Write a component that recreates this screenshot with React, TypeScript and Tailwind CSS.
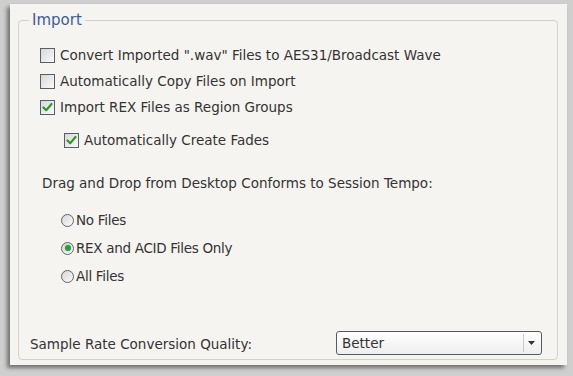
import React from 'react';

type CheckProps = { label: string; checked?: boolean; indent?: boolean };

const Checkbox: React.FC<CheckProps> = ({ label, checked, indent }) => (
  <div className={`h-[26px] flex items-center gap-[5px] ${indent ? 'pl-[45px]' : 'pl-[21px]'}`}>
    <span className="w-[15px] h-[15px] border border-[#55606c] bg-gradient-to-br from-[#d8d8d8] to-[#fafafa] flex items-center justify-center shrink-0">
      {checked && (
        <svg width="11" height="11" viewBox="0 0 11 11">
          <path d="M1.5 5.5 L4.2 8.2 L9.5 2" stroke="#2f9a2a" strokeWidth="2.2" fill="none" strokeLinecap="round" strokeLinejoin="round" />
        </svg>
      )}
    </span>
    <span>{label}</span>
  </div>
);

type RadioProps = { label: string; selected?: boolean };

const Radio: React.FC<RadioProps> = ({ label, selected }) => (
  <div className="h-[28px] flex items-center gap-[2px] pl-[42px]">
    <span className="w-[13px] h-[13px] rounded-full border border-[#5c6670] bg-gradient-to-br from-[#d6d6d6] to-[#fbfbfb] flex items-center justify-center shrink-0">
      {selected && <span className="w-[6px] h-[6px] rounded-full bg-[#2f9a3a] shadow-[0_0_2px_#7fd07f]" />}
    </span>
    <span className="tracking-[-0.3px]">{label}</span>
  </div>
);

export default function App() {
  return (
    <div className="w-[573px] h-[376px] bg-[#cfcfcf] pl-[10px] pt-[4px] pr-[6px] pb-[11px] font-['DejaVu_Sans',sans-serif] text-[13.5px] text-[#333]">
      <div className="h-full bg-[#f6f4f0] shadow-[-3px_3px_4px_rgba(0,0,0,0.45)] pt-[16px] pl-[8px] pr-[9px] pb-[5px]">
        <div className="relative h-full border border-[#d4d1cb] rounded-[4px] flex flex-col pt-[21px] pb-[3px]">
          <span className="absolute -top-[9px] left-[10px] px-[3px] bg-[#f6f4f0] text-[15px] leading-[16px] text-[#3d5c9c]">
            Import
          </span>
          <Checkbox label={'Convert Imported ".wav" Files to AES31/Broadcast Wave'} />
          <Checkbox label="Automatically Copy Files on Import" />
          <Checkbox label="Import REX Files as Region Groups" checked />
          <div className="mt-[7px]">
            <Checkbox label="Automatically Create Fades" checked indent />
          </div>
          <div className="h-[26px] mt-[17px] flex items-center pl-[23px]">
            Drag and Drop from Desktop Conforms to Session Tempo:
          </div>
          <div className="mt-[10px]">
            <Radio label="No Files" />
            <Radio label="REX and ACID Files Only" selected />
            <Radio label="All Files" />
          </div>
          <div className="flex-1" />
          <div className="h-[26px] flex items-center pl-[11px] pr-[15px]">
            <span className="flex-1 pt-[3px]">Sample Rate Conversion Quality:</span>
            <div className="w-[206px] h-[24px] border border-[#555b62] rounded-[3px] bg-gradient-to-b from-[#ffffff] to-[#eeeeee] flex items-center">
              <span className="flex-1 pl-[5px]">Better</span>
              <span className="w-[16px] h-[18px] mr-[2px] border-l border-[#c9c9c9] flex items-center justify-center">
                <svg width="7" height="4" viewBox="0 0 7 4">
                  <path d="M0 0 L7 0 L3.5 4 Z" fill="#333" />
                </svg>
              </span>
            </div>
          </div>
        </div>
      </div>
    </div>
  );
}
